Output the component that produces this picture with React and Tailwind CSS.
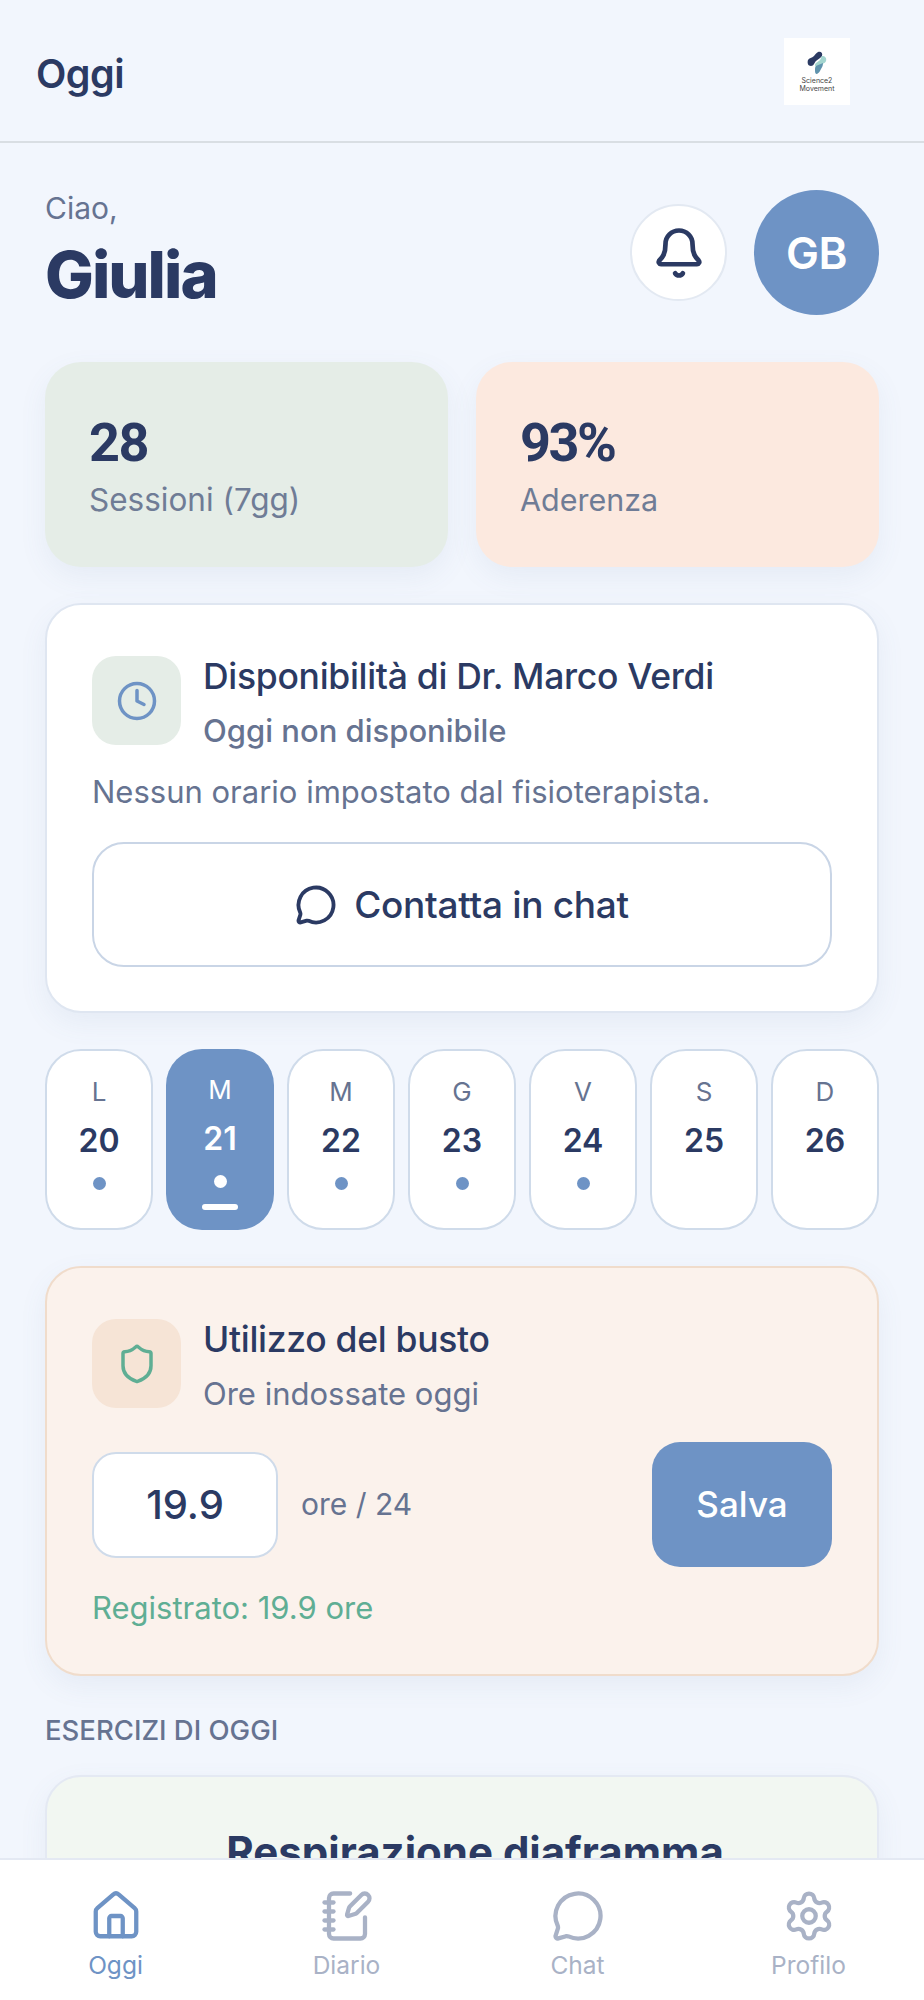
import { Bell, Clock, MessageCircle, Shield, House, NotebookPen, Settings } from "lucide-react";

const days = [
  { l: "L", n: 20, dot: true },
  { l: "M", n: 21, dot: true, active: true },
  { l: "M", n: 22, dot: true },
  { l: "G", n: 23, dot: true },
  { l: "V", n: 24, dot: true },
  { l: "S", n: 25 },
  { l: "D", n: 26 },
];

const tabs = [
  { label: "Oggi", Icon: House, active: true },
  { label: "Diario", Icon: NotebookPen },
  { label: "Chat", Icon: MessageCircle },
  { label: "Profilo", Icon: Settings },
];

function Logo() {
  return (
    <div className="w-[66px] h-[67px] bg-white flex flex-col items-center pt-[13px]">
      <svg width="24" height="24" viewBox="0 0 24 24">
        <path d="M13 1c3-1 5 1 4 4-1 2-4 3-6 5-2 2-2 5-5 5-3 0-4-3-3-6 1-2 4-2 6-4 1-1 2-3 4-4z" fill="#2b3a63" />
        <path d="M17 5c3 0 5 2 4 5-1 3-5 3-8 5-1 1-3 1-3-1 0-2 3-3 5-5 1-1 1-3 2-4z" fill="#a3d5cf" />
        <path d="M11 15c2-1 5-2 7-3 0 3-1 4-2 6-1 2-2 4-4 5-2 0-2-2-2-4 0-2 0-3 1-4z" fill="#5f93ad" />
      </svg>
      <span className="text-[7px] leading-[8px] text-[#444] text-center mt-[2px]">
        Science2
        <br />
        Movement
      </span>
    </div>
  );
}

function CardHead({ icon, iconBg, title, sub, subClass }) {
  return (
    <div className="flex gap-[22px]">
      <div className={`w-[89px] h-[89px] rounded-[24px] flex items-center justify-center shrink-0 ${iconBg}`}>{icon}</div>
      <div className="-mt-[2px]">
        <div className="text-[35.5px] leading-[46px] font-medium text-[#2b3a63] tracking-[-0.3px] whitespace-nowrap">{title}</div>
        <div className={`text-[31px] leading-[42px] mt-[10px] text-[#667391] whitespace-nowrap ${subClass}`}>{sub}</div>
      </div>
    </div>
  );
}

export default function App() {
  return (
    <div className="w-[924px] h-[2000px] overflow-hidden flex flex-col bg-[#f2f6fd] font-['Inter',sans-serif]">
      <header className="h-[143px] shrink-0 border-b-2 border-[#d9dee3] flex items-start justify-between pl-[36px] pr-[74px] pt-[38px]">
        <h1 className="text-[39.5px] leading-[72px] font-semibold text-[#2b3a63] tracking-[-0.5px]">Oggi</h1>
        <Logo />
      </header>

      <main className="flex-1 min-h-0 overflow-hidden px-[45px] pt-[47px]">
        <div className="flex items-center justify-between">
          <div className="-mt-[4px]">
            <div className="text-[30px] leading-[40px] text-[#667391]">Ciao,</div>
            <div className="text-[65px] leading-[76px] mt-[9px] font-extrabold text-[#2b3a63] tracking-[-2px]">Giulia</div>
          </div>
          <div className="flex items-center gap-[27px]">
            <button className="w-[97px] h-[97px] rounded-full bg-white border-2 border-[#e3e9f2] flex items-center justify-center">
              <Bell size={54} strokeWidth={2.1} className="text-[#2b3a63]" />
            </button>
            <div className="w-[125px] h-[125px] rounded-full bg-[#6e93c5] flex items-center justify-center text-white text-[44px] font-semibold tracking-[-0.5px]">
              GB
            </div>
          </div>
        </div>

        <div className="grid grid-cols-2 gap-[28px] mt-[47px]">
          <div className="h-[205px] rounded-[36px] bg-[#e5ede7] pl-[44px] pt-[49px] shadow-[0_10px_28px_rgba(90,110,150,0.08)]">
            <div className="font-['Roboto',sans-serif] text-[54px] leading-[64px] font-bold text-[#2b3a63] tracking-[-1.5px]">28</div>
            <div className="text-[31.5px] leading-[40px] text-[#6f7c96] mt-[5px]">Sessioni (7gg)</div>
          </div>
          <div className="h-[205px] rounded-[36px] bg-[#fce9df] pl-[44px] pt-[49px] shadow-[0_10px_28px_rgba(90,110,150,0.08)]">
            <div className="font-['Roboto',sans-serif] text-[54px] leading-[64px] font-bold text-[#2b3a63] tracking-[-2.5px]">93%</div>
            <div className="text-[30.5px] leading-[40px] text-[#6f7c96] mt-[5px]">Aderenza</div>
          </div>
        </div>

        <section className="mt-[36px] h-[410px] rounded-[36px] bg-white border-2 border-[#dfe6f1] px-[45px] pt-[51px] shadow-[0_10px_28px_rgba(90,110,150,0.08)]">
          <CardHead
            icon={<Clock size={42} strokeWidth={2} className="text-[#6e93c5]" />}
            iconBg="bg-[#e5ede7]"
            title="Disponibilità di Dr. Marco Verdi"
            sub="Oggi non disponibile"
            subClass="font-medium"
          />
          <p className="text-[31px] leading-[40px] text-[#667391] mt-[20px]">Nessun orario impostato dal fisioterapista.</p>
          <button className="mt-[30px] w-full h-[125px] rounded-[32px] border-2 border-[#c9d5e6] bg-white flex items-center justify-center gap-[17px] text-[37px] font-medium text-[#2b3a63] tracking-[-0.3px]">
            <MessageCircle size={42} strokeWidth={2.2} />
            Contatta in chat
          </button>
        </section>

        <div className="grid grid-cols-7 gap-[13px] mt-[36px]">
          {days.map((d) => (
            <div
              key={d.n}
              className={`h-[181px] rounded-[36px] flex flex-col items-center pt-[23px] ${
                d.active ? "bg-[#6e93c5] text-white" : "bg-white border-2 border-[#cfdbea] text-[#2b3a63]"
              }`}
            >
              <span className={`text-[26px] leading-[36px] ${d.active ? "text-white" : "text-[#667391]"}`}>{d.l}</span>
              <span className="text-[32px] leading-[40px] font-semibold mt-[11px]">{d.n}</span>
              {d.dot && <span className={`w-[13px] h-[13px] rounded-full mt-[16px] ${d.active ? "bg-white" : "bg-[#6e93c5]"}`} />}
              {d.active && <span className="w-[36px] h-[6px] rounded-full bg-white mt-[16px]" />}
            </div>
          ))}
        </div>

        <section className="mt-[36px] h-[410px] rounded-[36px] bg-[#fbf2ec] border-2 border-[#f0dccb] px-[45px] pt-[51px] shadow-[0_10px_28px_rgba(90,110,150,0.08)]">
          <CardHead
            icon={<Shield size={42} strokeWidth={2} className="text-[#5fae94]" />}
            iconBg="bg-[#f6e4d6]"
            title="Utilizzo del busto"
            sub="Ore indossate oggi"
          />
          <div className="flex items-center mt-[27px]">
            <div className="w-[186px] h-[106px] rounded-[24px] bg-white border-2 border-[#cfdbea] flex items-center justify-center text-[40px] font-medium text-[#2b3a63]">
              19.9
            </div>
            <span className="ml-[23px] text-[30px] text-[#667391]">ore / 24</span>
            <button className="ml-auto w-[180px] h-[125px] rounded-[28px] bg-[#6e93c5] text-white text-[35px] font-medium">Salva</button>
          </div>
          <p className="mt-[21px] text-[31px] leading-[40px] text-[#5fae94]">Registrato: 19.9 ore</p>
        </section>

        <h2 className="mt-[37px] text-[27.5px] leading-[34px] font-medium text-[#667391]">ESERCIZI DI OGGI</h2>
        <section className="mt-[28px] h-[300px] rounded-[36px] bg-[#f2f7f2] border-2 border-[#e4e9f3] pt-[52px] pl-[26px] text-center shadow-[0_10px_28px_rgba(90,110,150,0.08)]">
          <div className="text-[42px] leading-[46px] font-bold text-[#2b3a63]">Respirazione diaframma</div>
        </section>
      </main>

      <nav className="h-[142px] shrink-0 relative bg-white border-t-2 border-[#e4e9f3] grid grid-cols-4 pt-[29px]">
        {tabs.map(({ label, Icon, active }) => (
          <div key={label} className={`flex flex-col items-center ${active ? "text-[#6e93c5]" : "text-[#a9b2c6]"}`}>
            <Icon size={54} strokeWidth={1.9} />
            <span className="text-[24.5px] leading-[32px] mt-[6px]">{label}</span>
          </div>
        ))}
      </nav>
    </div>
  );
}
